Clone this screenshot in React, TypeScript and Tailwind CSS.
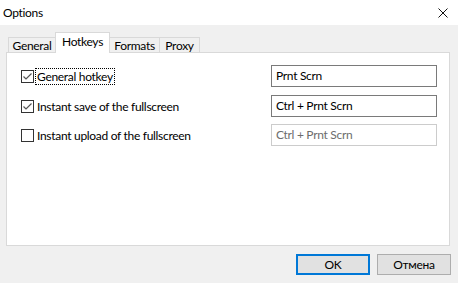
import React from "react";

const font = { fontFamily: 'Lato, "Segoe UI", sans-serif' };

const Check: React.FC<{ checked: boolean }> = ({ checked }) => (
  <span className="flex h-[13px] w-[13px] shrink-0 items-center justify-center border border-[#333333] bg-white">
    {checked && (
      <svg width="11" height="11" viewBox="0 0 11 11">
        <path d="M1.5 5.5 L4 8 L9.5 2.5" fill="none" stroke="#555555" strokeWidth="1.2" />
      </svg>
    )}
  </span>
);

interface RowProps {
  label: string;
  checked: boolean;
  hotkey: string;
  focused?: boolean;
  className?: string;
}

const HotkeyRow: React.FC<RowProps> = ({ label, checked, hotkey, focused, className }) => (
  <div className={`flex h-[22px] items-center justify-between ${className ?? ""}`}>
    <label className="flex items-center">
      <Check checked={checked} />
      <span
        className={`ml-[1px] px-[1px] text-[12px] leading-[15px] text-black border border-dotted ${
          focused ? "border-black" : "border-transparent"
        }`}
      >
        {label}
      </span>
    </label>
    <div
      className={`flex h-[22px] w-[166px] items-center border bg-white px-[4px] text-[12px] ${
        checked ? "border-[#7a7a7a] text-black" : "border-[#cccccc] text-[#6d6d6d]"
      }`}
    >
      {hotkey}
    </div>
  </div>
);

const tabs = ["General", "Hotkeys", "Formats", "Proxy"];
const tabWidths: Record<string, string> = {
  General: "w-[48px]",
  Hotkeys: "w-[55px]",
  Formats: "w-[51px]",
  Proxy: "w-[41px]",
};

export default function App() {
  return (
    <div
      className="flex h-[283px] w-[458px] flex-col bg-[#f0f0f0] tracking-[-0.3px] text-black"
      style={font}
    >
      {/* Title bar */}
      <div className="flex h-[25px] items-center justify-between bg-white pl-[3px] pr-[10px]">
        <span className="text-[12px]">Options</span>
        <svg width="10" height="10" viewBox="0 0 10 10">
          <path d="M0.5 0.5 L9.5 9.5 M9.5 0.5 L0.5 9.5" stroke="#111" strokeWidth="1" />
        </svg>
      </div>

      {/* Tabs */}
      <div className="mt-[7px] flex h-[20px] items-end pl-[8px]">
        {tabs.map((t, i) => {
          const active = t === "Hotkeys";
          return (
            <div
              key={t}
              className={`flex items-center justify-center border border-b-0 border-[#d9d9d9] text-[12px] ${
                tabWidths[t]
              } ${i > 0 ? "-ml-px" : ""} ${
                active
                  ? "relative z-10 -mb-px h-[21px] bg-white pb-[2px]"
                  : "h-[15px] bg-[#f0f0f0] pt-[1px]"
              }`}
            >
              {t}
            </div>
          );
        })}
      </div>

      {/* Panel */}
      <div className="ml-[6px] h-[194px] w-[444px] border border-[#d9d9d9] bg-white pl-[14px] pr-[12px] pt-[12px]">
        <HotkeyRow label="General hotkey" checked hotkey="Prnt Scrn" focused />
        <HotkeyRow
          className="mt-[8px]"
          label="Instant save of the fullscreen"
          checked
          hotkey="Ctrl + Prnt Scrn"
        />
        <HotkeyRow
          className="mt-[7px]"
          label="Instant upload of the fullscreen"
          checked={false}
          hotkey="Ctrl + Prnt Scrn"
        />
      </div>

      {/* Buttons */}
      <div className="mt-[8px] flex justify-end gap-[7px] pr-[7px]">
        <button className="flex h-[21px] w-[74px] items-center justify-center border-2 border-[#0078d7] bg-[#e1e1e1] text-[12px]">
          OK
        </button>
        <button className="flex h-[21px] w-[74px] items-center justify-center border border-[#adadad] bg-[#e1e1e1] text-[12px]">
          Отмена
        </button>
      </div>
    </div>
  );
}
